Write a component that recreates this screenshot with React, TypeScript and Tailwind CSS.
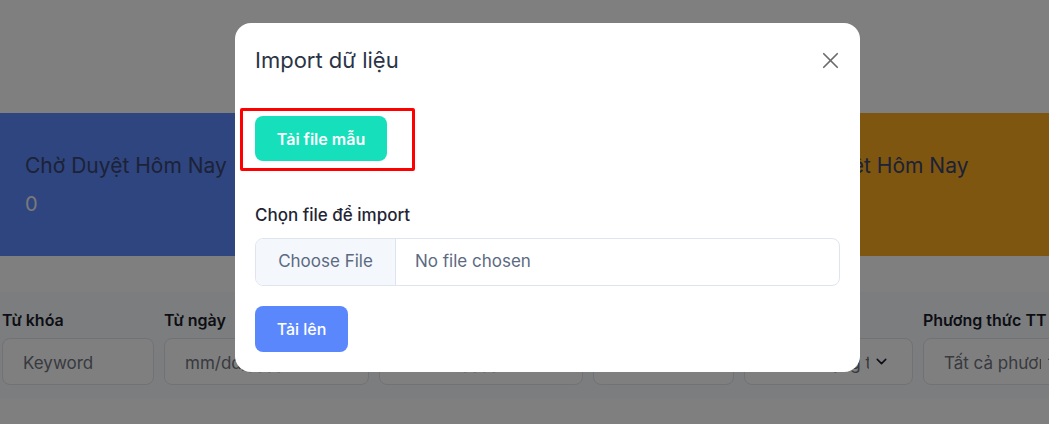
import { X, ChevronDown } from 'lucide-react';

const font = { fontFamily: 'Inter, "Noto Sans", sans-serif' };

interface Field {
  label: string;
  placeholder: string;
  width: string;
  select?: boolean;
}

const fields: Field[] = [
  { label: 'Từ khóa', placeholder: 'Keyword', width: 'w-[152px]' },
  { label: 'Từ ngày', placeholder: 'mm/dd/yyyy', width: 'w-[205px]' },
  { label: 'Đến ngày', placeholder: 'mm/dd/yyyy', width: 'w-[204px]' },
  { label: 'Mã đơn', placeholder: 'Mã đơn', width: 'w-[141px]' },
  { label: 'Trạng thái', placeholder: 'Tất cả trạng thái', width: 'w-[169px]', select: true },
  { label: 'Phương thức TT', placeholder: 'Tất cả phương thức', width: 'w-[162px]', select: true },
];

function Page() {
  return (
    <div className="w-[1049px] h-[424px] bg-white overflow-hidden">
      <div className="h-[113px]" />
      <div className="flex gap-6 h-[143px]">
        <div className="w-[372px] shrink-0 bg-[#5e8aff] px-[25px] pt-[40px]">
          <div className="text-[21px] leading-[26px] text-[#38446e] whitespace-nowrap">Chờ Duyệt Hôm Nay</div>
          <div className="text-[20px] leading-[26px] mt-[12px] text-[#f2f2f2]">0</div>
        </div>
        <div className="w-[335px] shrink-0 bg-[#3ccf8e] px-[25px] pt-[40px]">
          <div className="text-[21px] leading-[26px] text-[#38446e] whitespace-nowrap">Đã Thanh Toán</div>
          <div className="text-[20px] leading-[26px] mt-[12px] text-[#f2f2f2]">0</div>
        </div>
        <div className="w-[400px] shrink-0 bg-[#feac1e] px-[25px] pt-[40px]">
          <div className="text-[21px] leading-[26px] text-[#38446e] whitespace-nowrap">Đã Duyệt Hôm Nay</div>
          <div className="text-[20px] leading-[26px] mt-[12px] text-[#f2f2f2]">0</div>
        </div>
      </div>
      <div className="mt-[36px] h-[106px] bg-[#f9fafc] pl-[2px] pt-[17px] flex gap-[10px]">
        {fields.map((f) => (
          <div key={f.label} className={`${f.width} shrink-0 flex flex-col`}>
            <div className="text-[16px] leading-[22px] font-semibold text-[#1a1d2b] whitespace-nowrap">{f.label}</div>
            <div className="mt-[7px] h-[47px] rounded-[8px] border border-[#e2e5ec] bg-white flex items-center gap-[4px] pl-[20px] pr-[22px] overflow-hidden">
              <span className="flex-1 min-w-0 overflow-hidden text-[17px] leading-[24px] pt-[2px] text-[#70747f] whitespace-nowrap">{f.placeholder}</span>
              {f.select && <ChevronDown size={17} strokeWidth={2.2} className="text-[#1a1d2b] shrink-0" />}
            </div>
          </div>
        ))}
      </div>
    </div>
  );
}

export default function App() {
  return (
    <div className="relative w-[1049px] h-[424px] overflow-hidden" style={font}>
      <Page />
      <div className="absolute inset-0 bg-black/50" />
      <div className="absolute left-[235px] top-[23px] w-[625px] h-[349px] bg-white rounded-[16px] px-[20px] pt-[23px]">
        <div className="flex items-center justify-between h-[28px]">
          <h2 className="text-[22px] leading-[28px] text-[#2b3445]">Import dữ liệu</h2>
          <X size={27} strokeWidth={1.5} className="text-[#6b6b6b] -mr-[4px]" />
        </div>
        <div className="mt-[34px] -ml-[15px] inline-block border-[3px] border-[#ff0000] rounded-[2px] pl-[12px] pr-[25px] pt-[5px] pb-[7px]">
          <button className="h-[45px] w-[132px] rounded-[8px] bg-[#16dfbb] text-white text-[16px] font-semibold">
            Tải file mẫu
          </button>
        </div>
        <div className="mt-[32px] text-[17px] leading-[24px] font-medium text-[#1f2535]">Chọn file để import</div>
        <div className="mt-[11px] h-[48px] rounded-[8px] border border-[#dfe5ef] flex overflow-hidden">
          <div className="w-[140px] bg-[#f4f7fb] border-r border-[#dfe5ef] flex items-center justify-center text-[17px] text-[#5b6a82]">
            Choose File
          </div>
          <div className="flex items-center pl-[19px] text-[17px] text-[#5b6a82]">No file chosen</div>
        </div>
        <button className="mt-[20px] h-[46px] w-[93px] rounded-[8px] bg-[#5b87fd] text-white text-[16px] font-medium">
          Tải lên
        </button>
      </div>
    </div>
  );
}
